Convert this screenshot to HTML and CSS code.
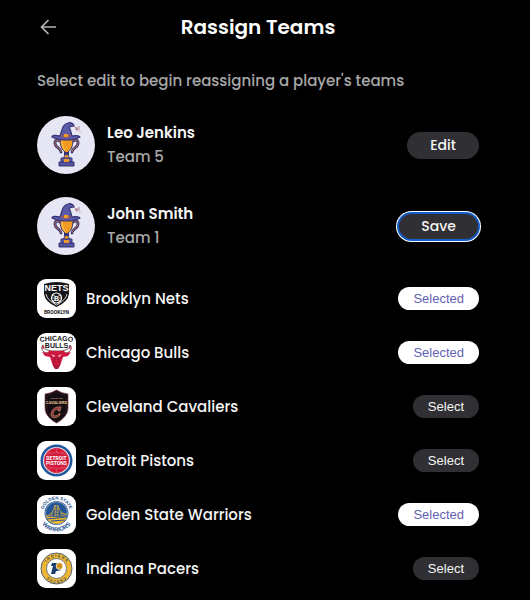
FILE: index.html
```html
<!DOCTYPE html>
<html lang="en">
<head>
<meta charset="utf-8">
<meta name="viewport" content="width=device-width, initial-scale=1">
<title>Rassign Teams</title>
<link rel="stylesheet" href="styles.css">
</head>
<body>
<svg class="sprite" aria-hidden="true">
  <symbol id="trophy" viewBox="0 0 58 58">
    <rect width="58" height="58" fill="#e7e6f5"/>
    <g fill="none" stroke="#393474" stroke-width="2.8" stroke-linecap="round">
      <path d="M23 25C18 22 17 27 19 30C21 32 24 33 24 36"/>
      <path d="M36 25C41 22 42 27 40 30C38 32 35 33 35 36"/>
    </g>
    <g fill="none" stroke="#b8764e" stroke-width="1">
      <path d="M23 25C18 22 17 27 19 30C21 32 24 33 24 36"/>
      <path d="M36 25C41 22 42 27 40 30C38 32 35 33 35 36"/>
    </g>
    <path d="M23 22H36C36 29 35 33 31 36V39L33 43H26L28 39V36C24 33 23 29 23 22Z" fill="#f39a22" stroke="#393474" stroke-width="1"/>
    <path d="M25 24C25 29 26 32 28 34" fill="none" stroke="#ffc04c" stroke-width="1.2"/>
    <path d="M27 36H32V39H27Z" fill="#393474"/>
    <path d="M24 42H35V46H24Z" fill="#5b5cac" stroke="#393474"/>
    <path d="M22 46H37V50H22Z" fill="#52549f" stroke="#393474"/>
    <path d="M27 43H32V46H27Z" fill="#e9962d"/>
    <path d="M23 20C25 15 25 8 31 7C34 6 37 8 37 10L32 11C34 14 34 17 35 20C40 19 43 20 43 21C37 25 22 25 15 21C15 19 19 19 23 20Z" fill="#5a5ba9" stroke="#393474" stroke-width="1.2" stroke-linejoin="round"/>
    <path d="M24 18C26 20 32 20 34 18V20C31 22 27 22 24 20Z" fill="#9b5c5e"/>
    <path d="M27 18H31V21H27Z" fill="#f39a22"/>
    <path d="M37 10L40 13M38 13H43M40 11V15M42 10V12M43 15V16" stroke="#a06d75" stroke-width=".8"/>
  </symbol>
</svg>

<main class="page">
  <header class="header">
    <button class="back" type="button" aria-label="Back">
      <svg viewBox="0 0 16 16" width="16" height="16" fill="none" stroke="currentColor" stroke-width="1.7"><path d="M16 8H1.500M8.500 1L1.500 8L8.500 15"/></svg>
    </button>
    <h1 class="title">Rassign Teams</h1>
  </header>
  <p class="intro">Select edit to begin reassigning a player's teams</p>

  <section class="players">
    <article class="player">
      <svg class="avatar" aria-hidden="true"><use href="#trophy"/></svg>
      <div class="details"><h2 class="name">Leo Jenkins</h2><p class="count">Team 5</p></div>
      <button class="button action" type="button">Edit</button>
    </article>
    <article class="player">
      <svg class="avatar" aria-hidden="true"><use href="#trophy"/></svg>
      <div class="details"><h2 class="name">John Smith</h2><p class="count">Team 1</p></div>
      <button class="button action focused" type="button">Save</button>
    </article>
  </section>

  <ul class="teams">
    <li class="team">
      <svg class="logo" viewBox="0 0 39 39" aria-hidden="true">
        <path d="M7 5Q19.500 1 32 5V15Q31 23 19.500 28Q8 23 7 15Z" fill="#17171a"/>
        <path d="M9 15Q10 21 19.500 26Q29 21 30 15" fill="none" stroke="#fff" stroke-width=".8"/>
        <text class="mark-text" x="19.500" y="12" font-size="9" fill="#fff">NETS</text>
        <circle cx="19.500" cy="19" r="5" fill="#17171a" stroke="#fff" stroke-width="1.200"/>
        <path d="M15 19H17M22 19H24M16 16L18 17M23 16L21 17M16 22L18 21M23 22L21 21" stroke="#fff" stroke-width=".6"/>
        <text class="mark-text" x="19.500" y="21.500" font-size="7" fill="#fff">B</text>
        <text class="mark-text narrow" x="19.500" y="35" font-size="5" fill="#17171a">BROOKLYN</text>
      </svg>
      <span class="team-name">Brooklyn Nets</span>
      <button class="button selected" type="button" aria-pressed="true">Selected</button>
    </li>
    <li class="team">
      <svg class="logo" viewBox="0 0 39 39" aria-hidden="true">
        <path d="M10 20C4 19 4 14 6 12C7 16 9 17 15 18H24C30 17 32 16 33 12C35 14 35 19 29 20Z" fill="#fff" stroke="#54232a" stroke-width=".8"/>
        <path d="M6 12L5 15L7 16ZM33 12L34 15L32 16Z" fill="#c9153a"/>
        <path d="M12 18H27L29 20L34 19L31 23L26 24L23 33L21 36H18L16 33L13 24L8 23L5 19L10 20Z" fill="#cf1740"/>
        <path d="M14 21L18 23L17 24ZM25 21L21 23L22 24Z" fill="#fff"/>
        <path d="M18 24L17 30M21 24L22 30M16 32L18 33H21L23 32M18 35H21" fill="none" stroke="#701c2d" stroke-width=".8"/>
        <path id="bulls-arc" d="M1 9.500Q19.500 6 38 9.500" fill="none"/>
        <text class="mark-text" font-size="7" fill="#161616"><textPath href="#bulls-arc" startOffset="50%">CHICAGO</textPath></text>
        <text class="mark-text" x="19.500" y="15" font-size="7" fill="#161616">BULLS</text>
      </svg>
      <span class="team-name">Chicago Bulls</span>
      <button class="button selected" type="button" aria-pressed="true">Selected</button>
    </li>
    <li class="team">
      <svg class="logo" viewBox="0 0 39 39" aria-hidden="true">
        <path d="M19.500 3Q24 6 31 7V21C31 28 25 33 19.500 36C14 33 8 28 8 21V7Q15 6 19.500 3Z" fill="#150d13" stroke="#82414b" stroke-width=".7"/>
        <path d="M19.500 5Q24 8 29 9V21C29 27 24 31 19.500 34C15 31 10 27 10 21V9Q15 8 19.500 5Z" fill="none" stroke="#322019" stroke-width=".6"/>
        <text class="mark-text" x="19.500" y="12" font-size="2" fill="#c8a273">CLEVELAND</text>
        <text class="mark-text narrow" x="19.500" y="17" font-size="4" fill="#e5c28f">CAVALIERS</text>
        <path d="M24 20L23 24H21L22 22C18 22 16 25 16 28C18 30 21 28 23 26L23 28C19 32 14 31 14 28C14 23 18 19 24 20Z" fill="#8a2743" stroke="#d6ac68" stroke-width=".6"/>
      </svg>
      <span class="team-name">Cleveland Cavaliers</span>
      <button class="button" type="button" aria-pressed="false">Select</button>
    </li>
    <li class="team">
      <svg class="logo" viewBox="0 0 39 39" aria-hidden="true">
        <circle cx="19.500" cy="19.500" r="16" fill="#21569f"/>
        <circle cx="19.500" cy="19.500" r="13" fill="#d41b3c" stroke="#d9dce5" stroke-width="1.200"/>
        <path d="M8 14Q19.500 9 31 14M8 25Q19.500 30 31 25M19.500 6V12M19.500 27V33M10 10Q14 11 15 13M29 10Q25 11 24 13M10 29Q14 28 15 26M29 29Q25 28 24 26" fill="none" stroke="#e16a7e" stroke-width=".5"/>
        <text class="mark-text narrow" x="19.500" y="19" font-size="5" fill="#fff">DETROIT</text>
        <text class="mark-text narrow" x="19.500" y="24" font-size="5" fill="#fff">PISTONS</text>
      </svg>
      <span class="team-name">Detroit Pistons</span>
      <button class="button" type="button" aria-pressed="false">Select</button>
    </li>
    <li class="team">
      <svg class="logo" viewBox="0 0 39 39" aria-hidden="true">
        <circle cx="19.500" cy="18" r="12" fill="#23569a"/>
        <circle cx="19.500" cy="18" r="11" fill="#21549a" stroke="#eee5c0" stroke-width=".5"/>
        <path d="M9 22H30Q28 28 20 29Q12 28 9 22Z" fill="#f0b92e"/>
        <path d="M18 10V27M21 10V27M18 11H21M18 14H21M18 17H21M18 20H21M9 21Q16 20 18 10M21 11Q24 20 30 19M11 20V23M13 19V23M15 17V23M24 17V23M26 18V23M28 19V23" fill="none" stroke="#e4ad36" stroke-width=".8"/>
        <path d="M10 24L30 22M14 26L28 25" stroke="#225193" stroke-width="1.200"/>
        <path id="state-arc" d="M6 18A13.500 13.500 0 0 1 33 18" fill="none"/>
        <path id="warriors-arc" d="M2 19A17.500 17.500 0 0 0 37 19" fill="none"/>
        <text class="mark-text" font-size="4.500" fill="#24518f"><textPath href="#state-arc" startOffset="50%">GOLDEN STATE</textPath></text>
        <text class="mark-text" font-size="6" fill="#24518f"><textPath href="#warriors-arc" startOffset="50%">WARRIORS</textPath></text>
      </svg>
      <span class="team-name">Golden State Warriors</span>
      <button class="button selected" type="button" aria-pressed="true">Selected</button>
    </li>
    <li class="team">
      <svg class="logo" viewBox="0 0 39 39" aria-hidden="true">
        <circle cx="19.500" cy="19.500" r="15.500" fill="#f0b532" stroke="#4b607a"/>
        <circle cx="19.500" cy="19.500" r="10" fill="#fff" stroke="#4b607a" stroke-width=".8"/>
        <path id="indiana-arc" d="M8 19.500A11.500 11.500 0 0 1 31 19.500" fill="none"/>
        <path id="pacers-arc" d="M5 19.500A14.500 14.500 0 0 0 34 19.500" fill="none"/>
        <text class="mark-text" font-size="4" fill="#4b5558"><textPath href="#indiana-arc" startOffset="50%">I N D I A N A</textPath></text>
        <text class="mark-text" font-size="4" fill="#4b5558"><textPath href="#pacers-arc" startOffset="50%">P A C E R S</textPath></text>
        <path d="M15 14H22Q26 15 25 19Q24 22 19 22L18 25H14L16 17H14Z" fill="#183d6b"/>
        <circle cx="22.500" cy="17" r="3.500" fill="#e9a927" stroke="#fff" stroke-width=".6"/>
        <path d="M20 15Q23 17 25 19M22 14Q24 17 23 20M20 18Q23 17 25 15" fill="none" stroke="#865f29" stroke-width=".4"/>
      </svg>
      <span class="team-name">Indiana Pacers</span>
      <button class="button" type="button" aria-pressed="false">Select</button>
    </li>
  </ul>
</main>
</body>
</html>
```

FILE: styles.css
```css
* {
  box-sizing: border-box;
}

body {
  margin: 0;
  background: #000;
  color: #f5f5f5;
  font-family: Poppins, Inter, sans-serif;
  font-size: 15px;
  line-height: 24px;
  font-weight: 500;
}

h1, h2, p, ul {
  margin: 0;
  padding: 0;
}

button {
  border: 0;
  font: inherit;
  cursor: pointer;
}

.sprite {
  display: none;
}

.page {
  padding: 11px 51px 12px 37px;
}

.header {
  display: grid;
  grid-template-columns: 24px 1fr 24px;
  align-items: center;
}

.back {
  display: flex;
  padding: 4px 3px;
  background: none;
  color: #b5b5b5;
}

.title {
  font-size: 20px;
  line-height: 32px;
  font-weight: 600;
  text-align: center;
  color: #fff;
}

.intro {
  margin-top: 26px;
  color: #a8a8a8;
}

.players {
  display: grid;
  gap: 23px;
  margin-top: 23px;
}

.player {
  display: flex;
  align-items: center;
  gap: 12px;
}

.avatar {
  flex: none;
  width: 58px;
  height: 58px;
  border-radius: 50%;
}

.details {
  flex: 1;
}

.name {
  font-size: 15px;
  line-height: 24px;
  font-weight: 600;
}

.count {
  color: #a8a8a8;
}

.button {
  flex: none;
  height: 23px;
  padding: 0 15px;
  border-radius: 14px;
  background: #303034;
  color: #f5f5f5;
  font-family: "Liberation Sans", Arial, sans-serif;
  font-size: 13px;
  line-height: 23px;
  font-weight: 400;
}

.action {
  height: 27px;
  padding: 0 23px;
  font-family: Poppins, Inter, sans-serif;
  font-size: 14px;
  line-height: 27px;
  font-weight: 500;
}

.focused {
  border-radius: 15px;
  box-shadow: inset 0 0 0 1px #1260d0, 0 0 0 1px #1260d0, 0 0 0 2px #fff;
}

.selected {
  background: #fff;
  color: #6462b5;
}

.teams {
  display: grid;
  gap: 15px;
  margin-top: 24px;
  list-style: none;
}

.team {
  display: flex;
  align-items: center;
  gap: 10px;
}

.logo {
  flex: none;
  width: 39px;
  height: 39px;
  border-radius: 9px;
  background: #fff;
}

.team-name {
  flex: 1;
}

.mark-text {
  font-family: "Liberation Sans", Arial, sans-serif;
  font-weight: 700;
  text-anchor: middle;
}

.narrow {
  font-family: Roboto, "Liberation Sans", sans-serif;
}
```
